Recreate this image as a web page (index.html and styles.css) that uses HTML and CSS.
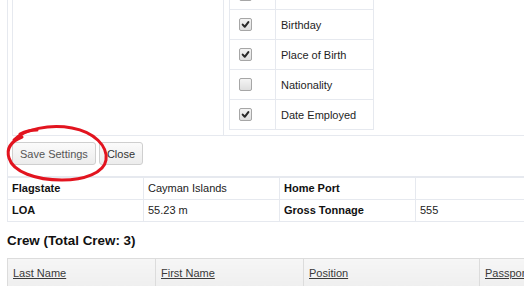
FILE: index.html
```
<!DOCTYPE html>
<html>
<head>
<meta charset="utf-8">
<link rel="stylesheet" href="styles.css">
</head>
<body>
<div class="page">
  <div class="panel">
    <div class="settings-row">
      <div class="settings-blank"></div>
      <table class="cols">
        <tr><td class="cb-cell"><span class="cb"></span></td><td class="lbl"></td></tr>
        <tr><td class="cb-cell"><span class="cb on"><svg viewBox="0 0 13 13"><path d="M3.2 6.6 L5.6 9.2 L9.9 3.6" /></svg></span></td><td class="lbl">Birthday</td></tr>
        <tr><td class="cb-cell"><span class="cb on"><svg viewBox="0 0 13 13"><path d="M3.2 6.6 L5.6 9.2 L9.9 3.6" /></svg></span></td><td class="lbl">Place of Birth</td></tr>
        <tr><td class="cb-cell"><span class="cb"></span></td><td class="lbl">Nationality</td></tr>
        <tr><td class="cb-cell"><span class="cb on"><svg viewBox="0 0 13 13"><path d="M3.2 6.6 L5.6 9.2 L9.9 3.6" /></svg></span></td><td class="lbl">Date Employed</td></tr>
      </table>
    </div>
    <div class="actions">
      <button class="btn save">Save Settings</button>
      <button class="btn">Close</button>
    </div>
  </div>
  <table class="info">
    <tr><th>Flagstate</th><td>Cayman Islands</td><th>Home Port</th><td></td></tr>
    <tr><th>LOA</th><td>55.23 m</td><th>Gross Tonnage</th><td>555</td></tr>
  </table>
  <h3 class="crew-title">Crew (Total Crew: 3)</h3>
  <table class="crew">
    <tr>
      <th class="c1"><a href="#">Last Name</a></th>
      <th class="c2"><a href="#">First Name</a></th>
      <th class="c3"><a href="#">Position</a></th>
      <th class="c4"><a href="#">Passport</a></th>
    </tr>
  </table>
</div>
<svg class="annotation" width="524" height="286" viewBox="0 0 524 286">
  <path d="M20 134 C 26 131, 32 130, 37 130" />
  <path d="M14 140 C 24 129, 50 124, 72 128 C 94 132, 108 146, 106 160 C 104 173, 84 180, 62 180 C 36 180, 13 172, 9 158 C 6 148, 12 141, 22 137" />
</svg>
</body>
</html>
```
FILE: styles.css
```
html, body {
  margin: 0;
  padding: 0;
  background: #fff;
  overflow: hidden;
}
body {
  font-family: "Liberation Sans", Arial, sans-serif;
  font-size: 11px;
  color: #222;
  width: 524px;
  height: 286px;
  position: relative;
}
.page {
  padding-left: 7px;
}
.panel {
  border-left: 1px solid #e6e9ef;
  padding-left: 4px;
}
.settings-row {
  display: flex;
  align-items: flex-start;
  margin-top: -21px;
  border-left: 1px solid #e6e9ef;
  border-bottom: 1px solid #e6e9ef;
}
.settings-blank {
  width: 210px;
  align-self: stretch;
  border-right: 1px solid #e6e9ef;
}
.cols {
  border-collapse: collapse;
  margin: 0 0 5px 5px;
}
.cols td {
  border: 1px solid #e6e9ef;
  height: 30px;
  padding: 0;
  box-sizing: border-box;
}
.cb-cell {
  width: 46px;
  padding-left: 9px !important;
}
.lbl {
  width: 98px;
  padding-left: 5px !important;
  color: #1e1e1e;
}
.cb {
  display: block;
  width: 11px;
  height: 11px;
  border: 1px solid #a6a6a6;
  border-radius: 2px;
  background: linear-gradient(#f4f4f4, #dedede);
}
.cb svg {
  display: block;
  width: 11px;
  height: 11px;
}
.cb path {
  fill: none;
  stroke: #2a2a2a;
  stroke-width: 2.4;
  stroke-linecap: round;
  stroke-linejoin: round;
}
.actions {
  display: flex;
  gap: 3px;
  padding: 6px 0 11px 0;
}
.btn {
  font-family: "Liberation Sans", Arial, sans-serif;
  font-size: 11px;
  height: 23px;
  padding: 0 7px;
  margin: 0;
  border: 1px solid #cfcfcf;
  border-radius: 3px;
  background: linear-gradient(#fbfbfb, #ececec);
  color: #333;
}
.btn.save {
  color: #555;
}
.info {
  border-collapse: collapse;
  border-top: 2px solid #e6e9ef;
  width: 544px;
  table-layout: fixed;
}
.info th, .info td {
  border: 1px solid #e6e9ef;
  height: 22px;
  padding: 0 4px;
  text-align: left;
  box-sizing: border-box;
  width: 136px;
}
.info th {
  font-weight: bold;
  color: #111;
}
.crew-title {
  margin: 0;
  height: 36px;
  line-height: 38px;
  font-size: 13.4px;
  font-weight: bold;
  color: #111;
}
.crew {
  border-collapse: collapse;
  table-layout: fixed;
  width: 560px;
}
.crew th {
  height: 30px;
  border: 1px solid #dcdcdc;
  border-bottom: none;
  background: linear-gradient(#f6f6f6, #efefef);
  text-align: left;
  font-weight: normal;
  padding: 0 5px;
  box-sizing: border-box;
}
.crew .c1 { width: 148px; }
.crew .c2 { width: 148px; }
.crew .c3 { width: 176px; }
.crew .c4 { width: 88px; }
.crew a {
  color: #3a3a3a;
  text-decoration: underline;
}
.annotation {
  position: absolute;
  left: 0;
  top: 0;
  pointer-events: none;
}
.annotation path {
  fill: none;
  stroke: #e2141f;
  stroke-width: 3;
  stroke-linecap: round;
}
```
